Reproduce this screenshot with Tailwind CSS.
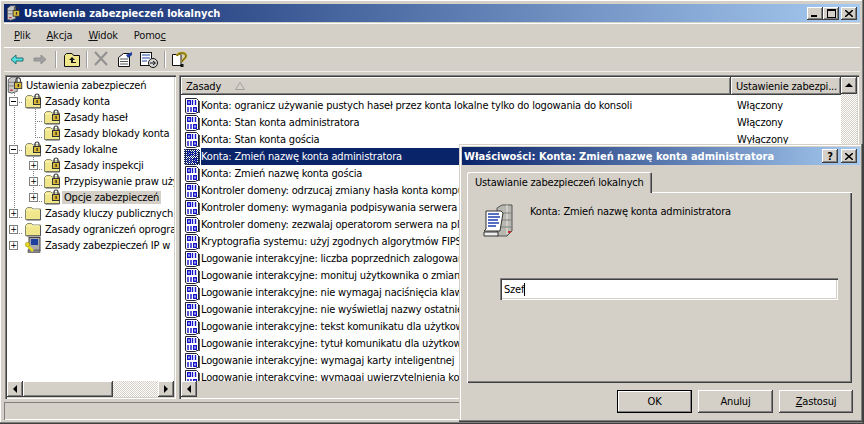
<!DOCTYPE html>
<html lang="pl"><head><meta charset="utf-8"><title>Ustawienia zabezpieczeń lokalnych</title>
<script src="https://cdn.jsdelivr.net/npm/@tailwindcss/browser@4"></script></head>
<body class="m-0 overflow-hidden">
<svg width="0" height="0" class="absolute">
<defs>
<pattern id="ck" width="2" height="2" patternUnits="userSpaceOnUse"><rect width="1" height="1" fill="#0a246a"/><rect x="1" y="1" width="1" height="1" fill="#0a246a"/></pattern>
<symbol id="p" viewBox="0 0 16 16"><path d="M1.500 .5H12.500L14.500 2.500V14.500H13L11.500 15.500H3L1.500 14.500Z" fill="#fff" stroke="#223"/><path d="M15.500 3V15" stroke="#555"/><g fill="none" stroke="#1414c8" stroke-width="1.400"><rect x="3.700" y="2.700" width="2.600" height="3.600"/><path d="M8.500 2V7M11.500 2V7M4 9V14M7 9V14"/><rect x="9.700" y="9.700" width="2.600" height="3.600"/></g></symbol>
<symbol id="s" viewBox="0 0 16 16"><use href="#p" width="16" height="16"/><rect width="16" height="16" fill="url(#ck)"/></symbol>
<symbol id="f" viewBox="0 0 16 16"><path d="M.5 4.500L2.500 2.500H6.500L8 4H15.500V14.500H.5Z" fill="#f0e68c" stroke="#8a8a70"/><path d="M1 5H14" stroke="#fff8c0"/><path d="M15.500 5V15H1.500" fill="none" stroke="#555"/></symbol>
<symbol id="l" viewBox="0 0 17 16"><path d="M.5 4.500L2.500 2.500H6.500L8 4H15.500V14.500H.5Z" fill="#f0e68c" stroke="#8a8a70"/><path d="M1 5H14" stroke="#fff8c0"/><path d="M15.500 5V15H1.500" fill="none" stroke="#555"/><path d="M10 5.500V3A2 2 0 0 1 14 3V5.500" fill="none" stroke="#333" stroke-width="1.200"/><rect x="8.500" y="5.500" width="7" height="6" fill="#d8b838" stroke="#333"/><rect x="11.500" y="7" width="1.200" height="3" fill="#222"/></symbol>
<symbol id="r" viewBox="0 0 17 20"><path d="M1 4L5 1H11L11 17L5 19L1 18Z" fill="#c8c8c8" stroke="#555"/><path d="M1 7H11M1 11H11" stroke="#777"/><rect x="3" y="15" width="3" height="1.500" fill="#c03030"/><path d="M9.500 7V4.500A2.500 2.500 0 0 1 14.500 4.500V7" fill="none" stroke="#333" stroke-width="1.200"/><rect x="8" y="7" width="8" height="7" fill="#d8b838" stroke="#333"/><rect x="11.500" y="9" width="1.500" height="3" fill="#222"/></symbol>
<symbol id="ip" viewBox="0 0 16 16"><rect x="4" y="0.500" width="11" height="13" fill="#aaa" stroke="#444"/><rect x="6" y="2" width="7" height="6" fill="#2040a0"/><rect x="3" y="13" width="12" height="2.500" fill="#888" stroke="#444" stroke-width=".6"/><path d="M1 7L8 14" stroke="#e8d820" stroke-width="2.500"/><circle cx="2.500" cy="7.500" r="2.200" fill="#e8d820" stroke="#8a8020" stroke-width=".5"/></symbol>
</defs></svg>

<div class="relative w-[864px] h-[424px] overflow-hidden bg-[#d4d0c8] font-['DejaVu_Sans_Condensed','DejaVu_Sans',sans-serif] text-[11px] leading-[13px] tracking-[-0.18px] text-black shadow-[inset_-1px_-1px_#404040,inset_-2px_-2px_#808080,inset_1px_1px_#fff] flex flex-col pt-[4px] pl-[4px] pr-[4px]">

  <div class="h-[18px] shrink-0 flex items-center bg-[linear-gradient(90deg,#0a246a,#a6caf0)] pl-[2px] pr-[3px] text-white font-bold tracking-normal">
    <svg width="15" height="16" class="mr-[3px]"><use href="#r"/></svg>
    <span class="flex-1">Ustawienia zabezpieczeń lokalnych</span>
    <span class="w-[16px] h-[13px] bg-[#d4d0c8] shadow-[inset_-1px_-1px_#404040,inset_1px_1px_#fff,inset_-2px_-2px_#808080] flex items-end justify-center pb-[3px]"><span class="block w-[6px] h-[2px] bg-black -translate-x-[1px]"></span></span>
    <span class="w-[16px] h-[13px] bg-[#d4d0c8] shadow-[inset_-1px_-1px_#404040,inset_1px_1px_#fff,inset_-2px_-2px_#808080] flex items-center justify-center"><span class="block w-[9px] h-[9px] border border-black border-t-2"></span></span>
    <span class="ml-[2px] w-[16px] h-[13px] bg-[#d4d0c8] shadow-[inset_-1px_-1px_#404040,inset_1px_1px_#fff,inset_-2px_-2px_#808080] flex items-center justify-center"><svg width="8" height="7"><path d="M0 0L8 7M8 0L0 7" stroke="#000" stroke-width="1.500"/></svg></span>
  </div>

  <div class="mt-[1px] h-[25px] shrink-0 border-t border-white border-b border-b-[#fff] flex items-center pl-[10px] gap-[16px] text-[#111]">
    <span><u>P</u>lik</span><span><u>A</u>kcja</span><span><u>W</u>idok</span><span>Pomo<u>c</u></span>
  </div>

  <div class="h-[24px] shrink-0 border-b border-b-[#f0eee8] flex items-center relative">
    <svg width="190" height="22" viewBox="0 0 190 22" class="ml-0">
      <path d="M7 10.500L12 6V9H19V12H12V15Z" fill="#50e0e0" stroke="#207070"/>
      <path d="M42 10.500L37 6V9H30V12H37V15Z" fill="#a0a0a0" stroke="#909090"/>
      <path d="M51.500 2V19M82.500 2V19M160.500 2V19" stroke="#a0a0a0"/><path d="M52.500 2V19M83.500 2V19M161.500 2V19" stroke="#fff"/>
      <path d="M60.500 6.500L62.500 4.500H68L69.500 6.500H75.500V17.500H60.500Z" fill="#f0e68c" stroke="#111"/><path d="M68 8L65 11H67V14H72V13H69V11H71Z" fill="#111"/>
      <path d="M91 3L103 16M103 3L91 16" stroke="#909090" stroke-width="2"/>
      <path d="M114.500 8.500L119.500 4.500H125.500V17.500H114.500Z" fill="#fff" stroke="#111"/><path d="M116 10H124M116 12.500H124M116 15H124" stroke="#555"/><path d="M122 6L128 3V6L124 9Z" fill="#2040a0"/>
      <rect x="136.500" y="3.500" width="11" height="13" fill="#fff" stroke="#111"/><path d="M138 6H146M138 9H146M138 12H143" stroke="#2040a0"/><circle cx="149" cy="14" r="4.500" fill="#d8d8d8" stroke="#111"/><path d="M146 14H151M149 12L151.500 14L149 16" fill="none" stroke="#111"/>
      <path d="M168.500 5.500H177V16.500H168.500Z" fill="#fff" stroke="#111"/><path d="M173 7C174 3 182 3 182 7C182 10 178 10 178 13" fill="none" stroke="#c8b020" stroke-width="2.500"/><path d="M173 7C174 3 182 3 182 7C182 10 178 10 178 13" fill="none" stroke="#111" stroke-width=".6"/><rect x="176.500" y="15" width="3" height="3" fill="#111"/>
    </svg>
  </div>

  <div class="mt-[3px] h-[324px] shrink-0 flex gap-[3px] pl-[1px] pr-[1px]">
    <div class="w-[171px] shrink-0 bg-white shadow-[inset_1px_1px_#808080,inset_2px_2px_#404040,inset_-1px_-1px_#fff,inset_-2px_-2px_#d4d0c8] p-[2px] flex flex-col">
      <div class="flex-1 relative overflow-hidden">
        <svg width="60" height="170" class="absolute left-0 top-0" shape-rendering="crispEdges"><path d="M7.500 14V140M7.500 25H15M7.500 73H15M28 30V62M28 44.500H36M28 60.500H36M26.500 80V125M26 92H36M26 108H36M26 124H36M7.500 140H15M7.500 156H15" stroke="#808080" stroke-dasharray="1 1" fill="none"/></svg>
        <div class="relative flex flex-col">
          <div class="h-[16px] flex items-center"><svg width="16" height="18" class="mr-[3px] shrink-0"><use href="#r"/></svg>Ustawienia zabezpieczeń</div>
          <div class="h-[16px] flex items-center pl-[2px]"><span class="w-[9px] h-[9px] border border-[#808080] bg-white flex items-center justify-center mr-[7px] shrink-0"><span class="w-[5px] h-px bg-black"></span></span><svg width="17" height="16" class="mr-[3px] shrink-0"><use href="#l"/></svg>Zasady konta</div>
          <div class="h-[16px] flex items-center pl-[37px]"><svg width="17" height="16" class="mr-[3px] shrink-0"><use href="#l"/></svg>Zasady haseł</div>
          <div class="h-[16px] flex items-center pl-[37px]"><svg width="17" height="16" class="mr-[3px] shrink-0"><use href="#l"/></svg>Zasady blokady konta</div>
          <div class="h-[16px] flex items-center pl-[2px]"><span class="w-[9px] h-[9px] border border-[#808080] bg-white flex items-center justify-center mr-[7px] shrink-0"><span class="w-[5px] h-px bg-black"></span></span><svg width="17" height="16" class="mr-[3px] shrink-0"><use href="#l"/></svg>Zasady lokalne</div>
          <div class="h-[16px] flex items-center pl-[22px] whitespace-nowrap"><span class="relative w-[9px] h-[9px] border border-[#808080] bg-white flex items-center justify-center mr-[6px] shrink-0 text-[9px] leading-none">+</span><svg width="17" height="16" class="mr-[3px] shrink-0"><use href="#l"/></svg>Zasady inspekcji</div>
          <div class="h-[16px] flex items-center pl-[22px] whitespace-nowrap"><span class="relative w-[9px] h-[9px] border border-[#808080] bg-white flex items-center justify-center mr-[6px] shrink-0 text-[9px] leading-none">+</span><svg width="17" height="16" class="mr-[3px] shrink-0"><use href="#l"/></svg>Przypisywanie praw użytkownika</div>
          <div class="h-[16px] flex items-center pl-[22px] whitespace-nowrap"><span class="relative w-[9px] h-[9px] border border-[#808080] bg-white flex items-center justify-center mr-[6px] shrink-0 text-[9px] leading-none">+</span><svg width="17" height="16" class="mr-[1px] shrink-0"><use href="#l"/></svg><span class="bg-[#d4d0c8] px-[2px]">Opcje zabezpieczeń</span></div>
          <div class="h-[16px] flex items-center pl-[2px] whitespace-nowrap"><span class="relative w-[9px] h-[9px] border border-[#808080] bg-white flex items-center justify-center mr-[7px] shrink-0 text-[9px] leading-none">+</span><svg width="16" height="16" class="mr-[4px] shrink-0"><use href="#f"/></svg>Zasady kluczy publicznych</div>
          <div class="h-[16px] flex items-center pl-[2px] whitespace-nowrap"><span class="relative w-[9px] h-[9px] border border-[#808080] bg-white flex items-center justify-center mr-[7px] shrink-0 text-[9px] leading-none">+</span><svg width="16" height="16" class="mr-[4px] shrink-0"><use href="#f"/></svg>Zasady ograniczeń oprogramowania</div>
          <div class="h-[16px] flex items-center pl-[2px] whitespace-nowrap"><span class="relative w-[9px] h-[9px] border border-[#808080] bg-white flex items-center justify-center mr-[7px] shrink-0 text-[9px] leading-none">+</span><svg width="16" height="16" class="mr-[4px] shrink-0"><use href="#ip"/></svg>Zasady zabezpieczeń IP w</div>
        </div>
      </div>
      <div class="h-[16px] shrink-0 flex">
        <span class="w-[16px] bg-[#d4d0c8] shadow-[inset_-1px_-1px_#404040,inset_1px_1px_#fff,inset_-2px_-2px_#808080] flex items-center justify-center"><svg width="5" height="8"><path d="M4 0V8L0 4Z"/></svg></span>
        <span class="w-[90px] bg-[#d4d0c8] shadow-[inset_-1px_-1px_#404040,inset_1px_1px_#fff,inset_-2px_-2px_#808080]"></span>
        <span class="flex-1 bg-[repeating-conic-gradient(#fff_0_25%,#d4d0c8_0_50%)] bg-[length:2px_2px]"></span>
        <span class="w-[16px] bg-[#d4d0c8] shadow-[inset_-1px_-1px_#404040,inset_1px_1px_#fff,inset_-2px_-2px_#808080] flex items-center justify-center"><svg width="5" height="8"><path d="M0 0V8L4 4Z"/></svg></span>
      </div>
    </div>

    <div class="flex-1 min-w-0 bg-white shadow-[inset_1px_1px_#808080,inset_2px_2px_#404040,inset_-1px_-1px_#fff,inset_-2px_-2px_#d4d0c8] p-[2px] flex flex-col">
      <div class="flex-1 min-h-0 flex">
        <div class="flex-1 min-w-0 flex flex-col">
          <div class="h-[18px] shrink-0 flex">
            <div class="w-[550px] bg-[#d4d0c8] shadow-[inset_-1px_-1px_#404040,inset_1px_1px_#fff,inset_-2px_-2px_#808080] flex items-center pl-[5px]"><span>Zasady</span><svg class="ml-[14px]" width="10" height="8"><path d="M5 .5L9.500 7.500H.5Z" fill="none" stroke="#a0a0a0"/></svg></div>
            <div class="flex-1 bg-[#d4d0c8] shadow-[inset_-1px_-1px_#404040,inset_1px_1px_#fff,inset_-2px_-2px_#808080] flex items-center pl-[5px] whitespace-nowrap overflow-hidden">Ustawienie zabezpi...</div>
          </div>
          <div class="flex-1 min-h-0 overflow-hidden pt-[2px] grid grid-cols-[550px_1fr] auto-rows-[17px] items-center whitespace-nowrap">
            <div class="flex items-center pl-[3px]"><svg width="16" height="16" class="mr-[1px] shrink-0"><use href="#p"/></svg>Konta: ogranicz używanie pustych haseł przez konta lokalne tylko do logowania do konsoli</div><div class="pl-[6px]">Włączony</div>
            <div class="flex items-center pl-[3px]"><svg width="16" height="16" class="mr-[1px] shrink-0"><use href="#p"/></svg>Konta: Stan konta administratora</div><div class="pl-[6px]">Włączony</div>
            <div class="flex items-center pl-[3px]"><svg width="16" height="16" class="mr-[1px] shrink-0"><use href="#p"/></svg>Konta: Stan konta gościa</div><div class="pl-[6px]">Wyłączony</div>
            <div class="flex items-center pl-[3px]"><svg width="16" height="16" class="mr-[1px] shrink-0"><use href="#s"/></svg><span class="flex-1 bg-[#0a246a] text-white h-[17px] leading-[17px]">Konta: Zmień nazwę konta administratora</span></div><div></div>
            <div class="flex items-center pl-[3px]"><svg width="16" height="16" class="mr-[1px] shrink-0"><use href="#p"/></svg>Konta: Zmień nazwę konta gościa</div><div></div>
            <div class="flex items-center pl-[3px]"><svg width="16" height="16" class="mr-[1px] shrink-0"><use href="#p"/></svg>Kontroler domeny: odrzucaj zmiany hasła konta komputera</div><div></div>
            <div class="flex items-center pl-[3px]"><svg width="16" height="16" class="mr-[1px] shrink-0"><use href="#p"/></svg>Kontroler domeny: wymagania podpisywania serwera LDAP</div><div></div>
            <div class="flex items-center pl-[3px]"><svg width="16" height="16" class="mr-[1px] shrink-0"><use href="#p"/></svg>Kontroler domeny: zezwalaj operatorom serwera na planowanie zadań</div><div></div>
            <div class="flex items-center pl-[3px]"><svg width="16" height="16" class="mr-[1px] shrink-0"><use href="#p"/></svg>Kryptografia systemu: użyj zgodnych algorytmów FIPS</div><div></div>
            <div class="flex items-center pl-[3px]"><svg width="16" height="16" class="mr-[1px] shrink-0"><use href="#p"/></svg>Logowanie interakcyjne: liczba poprzednich zalogowań</div><div></div>
            <div class="flex items-center pl-[3px]"><svg width="16" height="16" class="mr-[1px] shrink-0"><use href="#p"/></svg>Logowanie interakcyjne: monituj użytkownika o zmianę hasła</div><div></div>
            <div class="flex items-center pl-[3px]"><svg width="16" height="16" class="mr-[1px] shrink-0"><use href="#p"/></svg>Logowanie interakcyjne: nie wymagaj naciśnięcia klawiszy</div><div></div>
            <div class="flex items-center pl-[3px]"><svg width="16" height="16" class="mr-[1px] shrink-0"><use href="#p"/></svg>Logowanie interakcyjne: nie wyświetlaj nazwy ostatniego</div><div></div>
            <div class="flex items-center pl-[3px]"><svg width="16" height="16" class="mr-[1px] shrink-0"><use href="#p"/></svg>Logowanie interakcyjne: tekst komunikatu dla użytkowników</div><div></div>
            <div class="flex items-center pl-[3px]"><svg width="16" height="16" class="mr-[1px] shrink-0"><use href="#p"/></svg>Logowanie interakcyjne: tytuł komunikatu dla użytkowników</div><div></div>
            <div class="flex items-center pl-[3px]"><svg width="16" height="16" class="mr-[1px] shrink-0"><use href="#p"/></svg>Logowanie interakcyjne: wymagaj karty inteligentnej</div><div></div>
            <div class="flex items-center pl-[3px]"><svg width="16" height="16" class="mr-[1px] shrink-0"><use href="#p"/></svg>Logowanie interakcyjne: wymagaj uwierzytelnienia kontrolera</div><div></div>
          </div>
        </div>
        <div class="w-[16px] shrink-0 flex flex-col">
          <span class="h-[17px] bg-[#d4d0c8] shadow-[inset_-1px_-1px_#404040,inset_1px_1px_#fff,inset_-2px_-2px_#808080] flex items-center justify-center"><svg width="8" height="5"><path d="M0 4H8L4 0Z"/></svg></span>
          <span class="flex-1 bg-[repeating-conic-gradient(#fff_0_25%,#d4d0c8_0_50%)] bg-[length:2px_2px]"></span>
        </div>
      </div>
      <div class="h-[16px] shrink-0 flex bg-[#d4d0c8]">
        <span class="w-[16px] bg-[#d4d0c8] shadow-[inset_-1px_-1px_#404040,inset_1px_1px_#fff,inset_-2px_-2px_#808080] flex items-center justify-center"><svg width="5" height="8"><path d="M4 0V8L0 4Z"/></svg></span>
      </div>
    </div>
  </div>

  <div class="mt-[3px] h-[18px] shrink-0 shadow-[inset_1px_1px_#808080,inset_-1px_-1px_#fff]"></div>

  <div class="absolute left-[459px] top-[144px] w-[404px] h-[278px] bg-[#d4d0c8] shadow-[inset_-1px_-1px_#404040,inset_-2px_-2px_#808080,inset_1px_1px_#d4d0c8,inset_2px_2px_#fff] pt-[3px] px-[3px] flex flex-col">
    <div class="h-[18px] shrink-0 flex items-center bg-[linear-gradient(90deg,#0a246a,#a6caf0)] pl-[2px] pr-[3px] text-white font-bold tracking-normal whitespace-nowrap">
      <span class="flex-1">Właściwości: Konta: Zmień nazwę konta administratora</span>
      <span class="w-[16px] h-[14px] text-black bg-[#d4d0c8] shadow-[inset_-1px_-1px_#404040,inset_1px_1px_#fff,inset_-2px_-2px_#808080] flex items-center justify-center text-[11px] leading-none">?</span>
      <span class="ml-[3px] w-[16px] h-[14px] bg-[#d4d0c8] shadow-[inset_-1px_-1px_#404040,inset_1px_1px_#fff,inset_-2px_-2px_#808080] flex items-center justify-center"><svg width="8" height="7"><path d="M0 0L8 7M8 0L0 7" stroke="#000" stroke-width="1.500"/></svg></span>
    </div>
    <div class="mt-[7px] ml-[5px] w-[385px]">
      <div class="relative z-10 w-[185px] h-[21px] pl-[8px] flex items-center bg-[#d4d0c8] rounded-t-[2px] shadow-[inset_1px_1px_#fff,inset_-1px_0_#404040,inset_-2px_0_#808080] whitespace-nowrap">Ustawianie zabezpieczeń lokalnych</div>
      <div class="relative -mt-px h-[191px] shadow-[inset_1px_1px_#fff,inset_-1px_-1px_#404040,inset_-2px_-2px_#808080]">
        <div class="flex items-start pt-[12px] pl-[16px]">
          <svg width="32" height="34" viewBox="0 0 32 34" class="shrink-0">
            <path d="M14 4L19 1H29V27L24 32H14Z" fill="#b8b8b0" stroke="#555"/><path d="M24 1V30" stroke="#e8e8e0"/><path d="M14 9H29M14 16H29M14 23H29" stroke="#808080"/><rect x="25" y="27" width="3" height="2" fill="#c03030"/>
            <path d="M3 7H18L20 9L17 27H1L3 25Z" fill="#fff" stroke="#333"/><path d="M5 10H16M5 13H17M5 16H15M5 19H16M5 22H13" stroke="#2040b0" stroke-width="1.500"/><path d="M1 28H15V32H1Z" fill="#eee" stroke="#333"/>
          </svg>
          <span class="ml-[15px] mt-[1px]">Konta: Zmień nazwę konta administratora</span>
        </div>
        <div class="ml-[33px] mr-[14px] mt-[40px] h-[22px] bg-white shadow-[inset_1px_1px_#808080,inset_2px_2px_#404040,inset_-1px_-1px_#fff,inset_-2px_-2px_#d4d0c8] flex items-center pl-[4px]">Szef<span class="block w-px h-[13px] bg-black"></span></div>
      </div>
    </div>
    <div class="mt-[7px] flex justify-end gap-[6px] pr-[7px]">
      <span class="w-[75px] h-[23px] flex items-center justify-center bg-[#d4d0c8] border border-black shadow-[inset_-1px_-1px_#808080,inset_1px_1px_#fff]">OK</span>
      <span class="w-[75px] h-[23px] flex items-center justify-center bg-[#d4d0c8] shadow-[inset_-1px_-1px_#404040,inset_1px_1px_#fff,inset_-2px_-2px_#808080]">Anuluj</span>
      <span class="w-[74px] h-[23px] flex items-center justify-center bg-[#d4d0c8] shadow-[inset_-1px_-1px_#404040,inset_1px_1px_#fff,inset_-2px_-2px_#808080]"><span><u>Z</u>astosuj</span></span>
    </div>
  </div>
</div>
</body></html>
